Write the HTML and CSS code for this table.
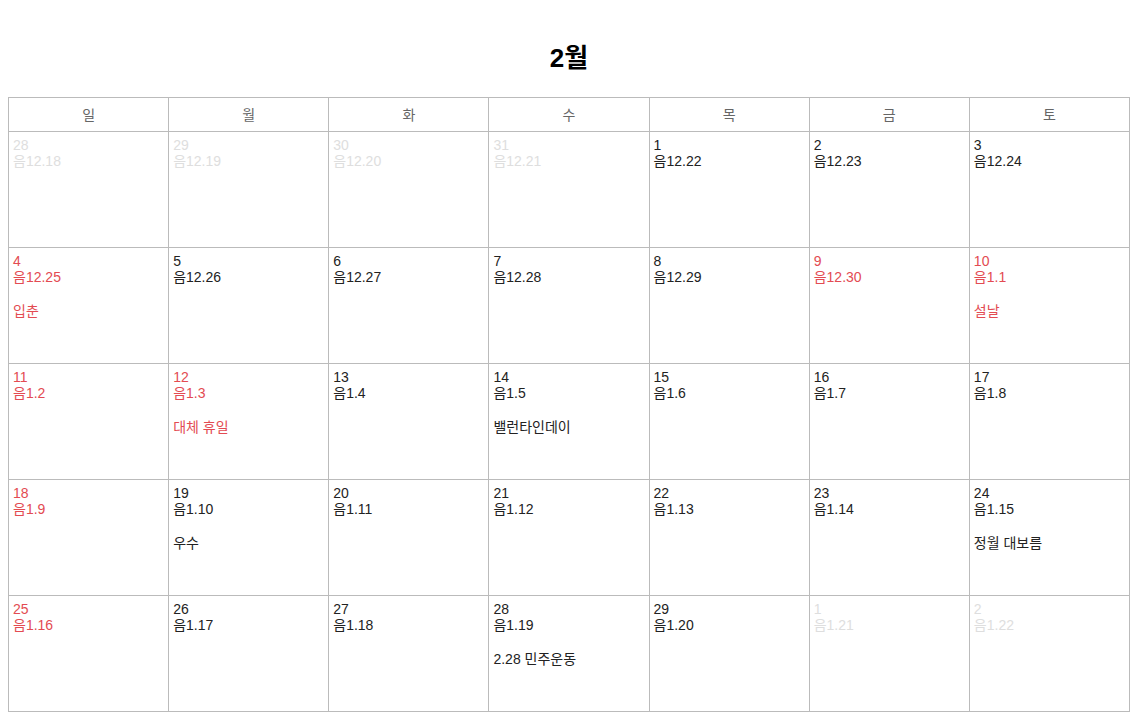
FILE: index.html
```html
<!DOCTYPE html>
<html lang="ko">
<head>
<meta charset="utf-8">
<title>2월</title>
<link rel="stylesheet" href="styles.css">
</head>
<body>
<h1 class="title">2월</h1>
<div class="calendar">
  <div class="head">일</div><div class="head">월</div><div class="head">화</div><div class="head">수</div><div class="head">목</div><div class="head">금</div><div class="head">토</div>

  <div class="cell other"><div>28</div><div>음12.18</div></div>
  <div class="cell other"><div>29</div><div>음12.19</div></div>
  <div class="cell other"><div>30</div><div>음12.20</div></div>
  <div class="cell other"><div>31</div><div>음12.21</div></div>
  <div class="cell"><div>1</div><div>음12.22</div></div>
  <div class="cell"><div>2</div><div>음12.23</div></div>
  <div class="cell"><div>3</div><div>음12.24</div></div>

  <div class="cell red"><div>4</div><div>음12.25</div><div class="event">입춘</div></div>
  <div class="cell"><div>5</div><div>음12.26</div></div>
  <div class="cell"><div>6</div><div>음12.27</div></div>
  <div class="cell"><div>7</div><div>음12.28</div></div>
  <div class="cell"><div>8</div><div>음12.29</div></div>
  <div class="cell red"><div>9</div><div>음12.30</div></div>
  <div class="cell red"><div>10</div><div>음1.1</div><div class="event">설날</div></div>

  <div class="cell red"><div>11</div><div>음1.2</div></div>
  <div class="cell red"><div>12</div><div>음1.3</div><div class="event">대체 휴일</div></div>
  <div class="cell"><div>13</div><div>음1.4</div></div>
  <div class="cell"><div>14</div><div>음1.5</div><div class="event">밸런타인데이</div></div>
  <div class="cell"><div>15</div><div>음1.6</div></div>
  <div class="cell"><div>16</div><div>음1.7</div></div>
  <div class="cell"><div>17</div><div>음1.8</div></div>

  <div class="cell red"><div>18</div><div>음1.9</div></div>
  <div class="cell"><div>19</div><div>음1.10</div><div class="event">우수</div></div>
  <div class="cell"><div>20</div><div>음1.11</div></div>
  <div class="cell"><div>21</div><div>음1.12</div></div>
  <div class="cell"><div>22</div><div>음1.13</div></div>
  <div class="cell"><div>23</div><div>음1.14</div></div>
  <div class="cell"><div>24</div><div>음1.15</div><div class="event">정월 대보름</div></div>

  <div class="cell red"><div>25</div><div>음1.16</div></div>
  <div class="cell"><div>26</div><div>음1.17</div></div>
  <div class="cell"><div>27</div><div>음1.18</div></div>
  <div class="cell"><div>28</div><div>음1.19</div><div class="event">2.28 민주운동</div></div>
  <div class="cell"><div>29</div><div>음1.20</div></div>
  <div class="cell other"><div>1</div><div>음1.21</div></div>
  <div class="cell other"><div>2</div><div>음1.22</div></div>
</div>
</body>
</html>
```

FILE: styles.css
```css
html, body {
  margin: 0;
  padding: 0;
  background: #fff;
}
body {
  padding: 8px 0 0 8px;
  font-family: "Liberation Sans", Arial, "Noto Sans CJK KR", sans-serif;
  font-size: 14px;
  color: #222;
}
.title {
  width: 1122px;
  margin: 35px 0 24px;
  text-align: center;
  font-size: 26px;
  line-height: 30px;
  font-weight: bold;
  color: #000;
}
.calendar {
  width: 1122px;
  box-sizing: border-box;
  display: grid;
  grid-template-columns: repeat(7, 1fr);
  grid-template-rows: 33px repeat(5, 115px);
  gap: 1px;
  border: 1px solid #bbb;
  background: #bbb;
}
.head {
  background: #fff;
  color: #666;
  display: flex;
  align-items: center;
  justify-content: center;
  line-height: 16px;
}
.cell {
  background: #fff;
  padding: 5px 4px 4px;
  line-height: 16px;
  color: #222;
}
.cell.red {
  color: #e34b52;
}
.cell.other {
  color: #dedede;
}
.event {
  margin-top: 18px;
}
```
